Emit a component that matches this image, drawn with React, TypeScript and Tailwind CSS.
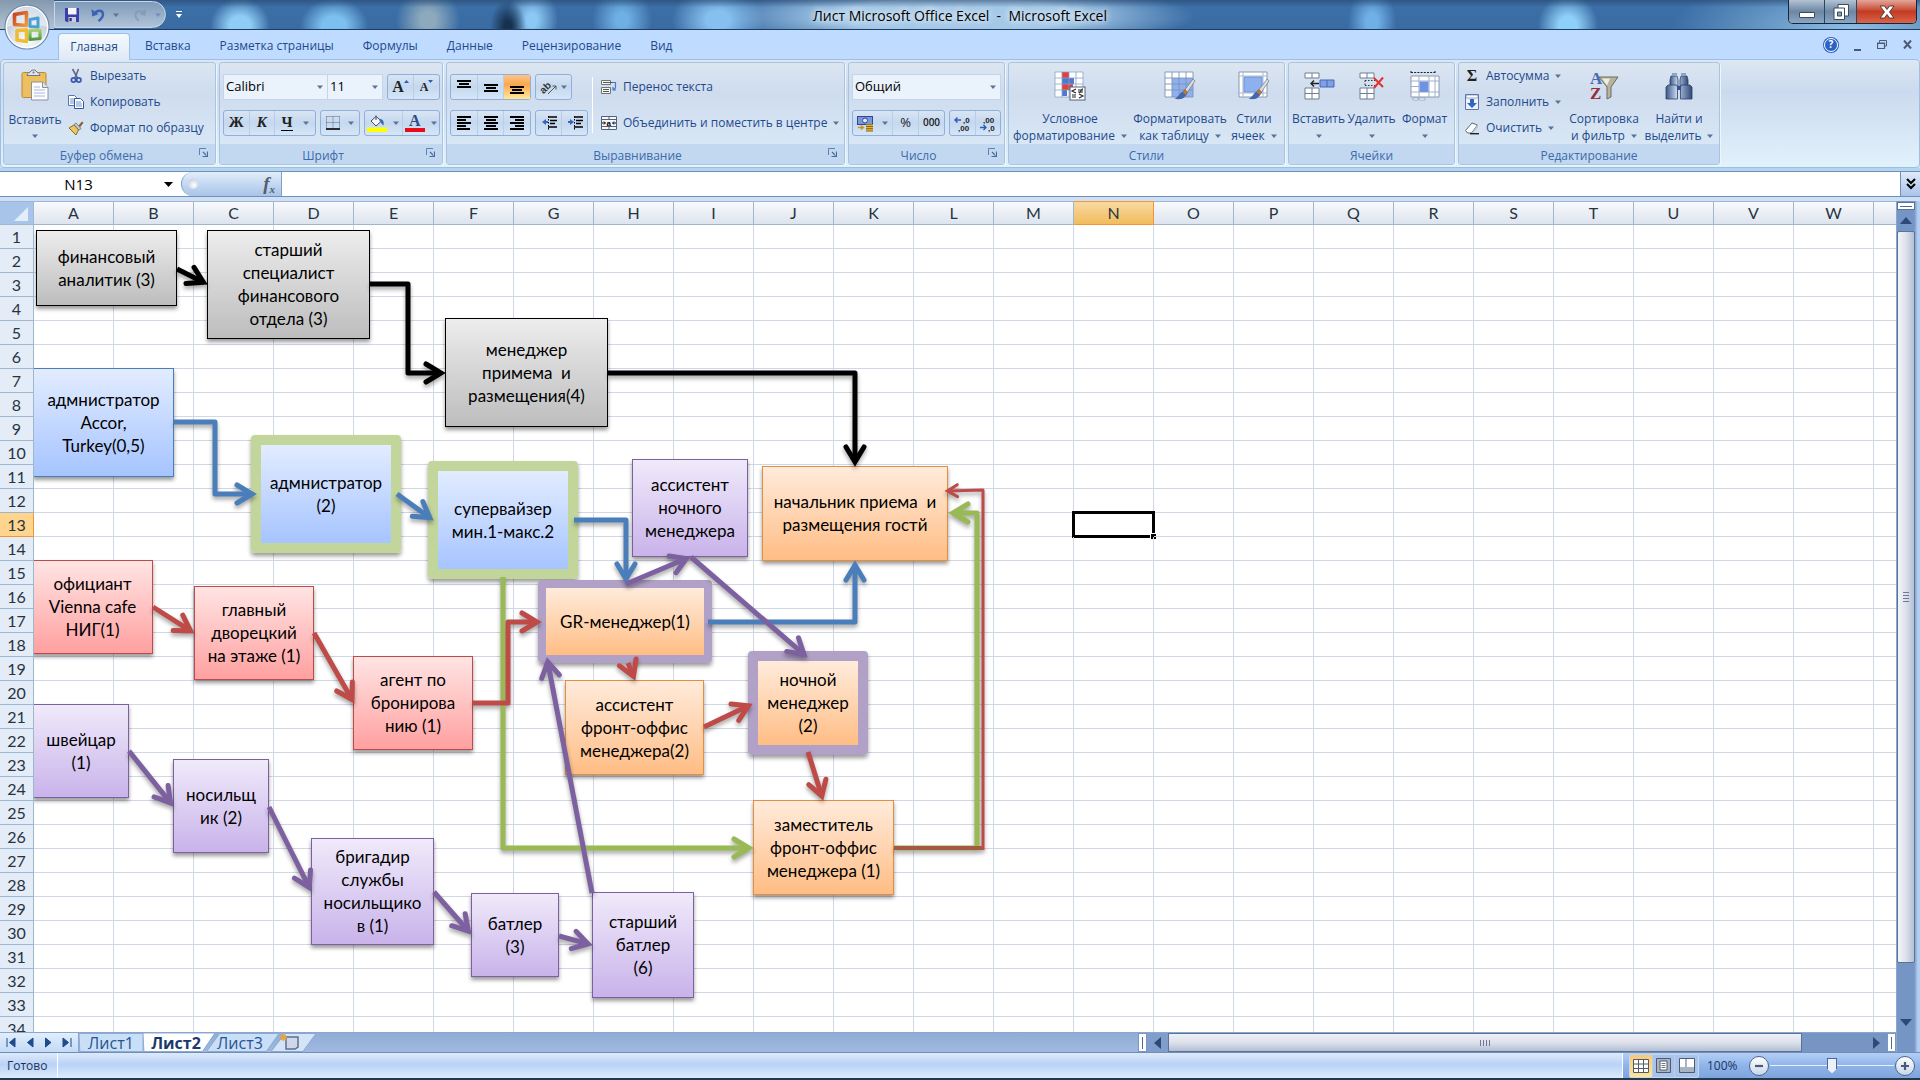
import React from "react";

type Pt = [number, number];

const COLS = "ABCDEFGHIJKLMNOPQRSTUVW".split("");
const ROWS = Array.from({ length: 34 }, (_, i) => i + 1);

/* ---------- small drawings ---------- */

function Caret({ className = "" }: { className?: string }) {
  return (
    <svg viewBox="0 0 6 4" className={"h-1 w-1.5 shrink-0 " + className} aria-hidden="true">
      <path d="M0 0.5h6L3 4z" fill="#5a7396" />
    </svg>
  );
}

function OfficeLogo() {
  return (
    <svg viewBox="0 0 46 46" className="h-[46px] w-[46px]" aria-hidden="true">
      <defs>
        <radialGradient id="orb" cx="50%" cy="80%" r="70%">
          <stop offset="0" stopColor="#ffffff" />
          <stop offset="0.55" stopColor="#d5dde9" />
          <stop offset="1" stopColor="#aebccd" />
        </radialGradient>
        <linearGradient id="oRed" x1="0" y1="0" x2="1" y2="1">
          <stop offset="0" stopColor="#c8411f" />
          <stop offset="1" stopColor="#f39a3c" />
        </linearGradient>
        <linearGradient id="oGreen" x1="0" y1="0" x2="0" y2="1">
          <stop offset="0" stopColor="#a7cf6a" />
          <stop offset="1" stopColor="#4f9a3f" />
        </linearGradient>
      </defs>
      <circle cx="23" cy="23" r="22" fill="url(#orb)" stroke="#6d86a6" strokeWidth="1.2" />
      <circle cx="23" cy="23" r="20.6" fill="none" stroke="#ffffff" strokeWidth="1.4" />
      <path d="M3 23a20 20 0 0 1 40 0c-12-4-28-4-40 0z" fill="#f2f6fb" opacity="0.6" />
      <g fill="none" strokeWidth="3.6" strokeLinejoin="round">
        <path d="M10.5 10.5l12-2v13l-12-1z" stroke="url(#oRed)" />
        <path d="M26 15.5l8-1.4v9l-8-.6z" stroke="#4a9fd4" strokeWidth="3" />
        <path d="M13 26.500l9.500-.5v11.500l-9.500-1.500z" stroke="#eebd35" />
        <path d="M26 26.500l10-.5v8.500l-10 1z" stroke="url(#oGreen)" strokeWidth="3.200" />
      </g>
    </svg>
  );
}

function SaveIcon() {
  return (
    <svg viewBox="0 0 14 14" className="h-3.5 w-3.5" aria-hidden="true">
      <path d="M0 0h14v14H1.500L0 12.500z" fill="#3b3fa8" />
      <path d="M3 0h8.500v6.500H3z" fill="#f4f6fb" />
      <path d="M3.500 9h7.500v5H3.500z" fill="#c9cfe2" />
      <path d="M4.500 10h2.200v3.200H4.500z" fill="#26286f" />
    </svg>
  );
}

function UndoIcon() {
  return (
    <svg viewBox="0 0 14 14" className="h-3.5 w-3.5" aria-hidden="true">
      <path d="M3.500 6C5.500 1.500 12 1.500 12 6.500c0 3-2 4.500-4.500 6.500" fill="none" stroke="#3b62b5" strokeWidth="2.400" />
      <path d="M0.500 1l.7 7.500 6.300-2.200z" fill="#3b62b5" />
    </svg>
  );
}

function RedoIcon() {
  return (
    <svg viewBox="0 0 14 14" className="h-3.5 w-3.5" aria-hidden="true">
      <path d="M10.500 5C8 1.500 2 3 2.500 8c.2 2 1.500 3.500 3.500 4.500" fill="none" stroke="#7f96b4" strokeWidth="2" />
      <path d="M13 1l-.5 7-6-2z" fill="#7f96b4" />
    </svg>
  );
}

function PasteIcon() {
  return (
    <svg viewBox="0 0 28 32" className="h-8 w-7" aria-hidden="true">
      <rect x="1" y="3.500" width="24" height="25" rx="1.500" fill="#eebf5e" stroke="#b98a35" />
      <path d="M6 6.500c0-3 3-2.500 4-4.500.7-1.400 4.300-1.400 5 0 1 2 4 1.500 4 4.500z" fill="#dfe3ea" stroke="#6c7686" />
      <circle cx="12.500" cy="3.500" r="1" fill="#6c7686" />
      <path d="M10.500 13h11l5.500 5.500V31h-16.500z" fill="#fdfdff" stroke="#8792a8" />
      <path d="M21.500 13v5.500H27" fill="#dfe6f2" stroke="#8792a8" />
      <path d="M13 18h6M13 21h11M13 24h11M13 27h11" stroke="#a9b9d8" />
    </svg>
  );
}

function CutIcon() {
  return (
    <svg viewBox="0 0 16 16" className="h-4 w-4" aria-hidden="true">
      <path d="M4.500 1l5 9M10.500 1L7 10" stroke="#5b6b86" strokeWidth="1.600" fill="none" />
      <circle cx="5.500" cy="12" r="2.100" fill="none" stroke="#3b59b0" strokeWidth="1.800" />
      <circle cx="10.800" cy="12" r="2.100" fill="none" stroke="#3b59b0" strokeWidth="1.800" />
    </svg>
  );
}

function CopyIcon() {
  return (
    <svg viewBox="0 0 16 16" className="h-4 w-4" aria-hidden="true">
      <path d="M0.500 1.500h6l2 2v8h-8z" fill="#fff" stroke="#5573ad" />
      <path d="M2 5h4M2 7h4M2 9h4" stroke="#6f92d0" />
      <path d="M6.500 4.500h6l3 3v7h-9z" fill="#fff" stroke="#34559b" />
      <path d="M8 8h5M8 10h6M8 12h6" stroke="#6f92d0" />
    </svg>
  );
}

function BrushIcon() {
  return (
    <svg viewBox="0 0 16 16" className="h-4 w-4" aria-hidden="true">
      <path d="M1 8l5-3 4.500 5L8 15z" fill="#ecc95f" stroke="#8b6a2a" />
      <path d="M6 4.500L8 3l5 5.500-2 1.500z" fill="#c9ccd4" stroke="#6b6f7a" strokeWidth="0.800" />
      <path d="M10.500 5.500L14 1.500l1.500 1.300-3.500 4.500z" fill="#8c5a2b" />
    </svg>
  );
}

function BordersIcon() {
  return (
    <svg viewBox="0 0 14 14" className="h-3.5 w-3.5" aria-hidden="true">
      <path d="M.5.5h13M.5.5v12M13.500.5v12M7 .5v12M.5 6.500h13" stroke="#5c6a85" strokeDasharray="1 1" fill="none" />
      <path d="M0 13h14" stroke="#000" strokeWidth="1.600" />
    </svg>
  );
}

function FillIcon() {
  return (
    <svg viewBox="0 0 20 18" className="h-[18px] w-5" aria-hidden="true">
      <path d="M4 7l5-4.500L14.500 7 9 12z" fill="#f2f5fa" stroke="#3d4b66" />
      <path d="M9 6V1.500" stroke="#3d4b66" />
      <path d="M12.500 5c3 0 5 2 4 6.500-2-1-2-3-4-4.500z" fill="#3f68b8" />
      <path d="M0 13.500h20v4.500H0z" fill="#ffff00" />
    </svg>
  );
}

function FontColorIcon() {
  return (
    <span className="flex w-5 flex-col items-center" aria-hidden="true">
      <span className="font-['Liberation_Serif',serif] text-base leading-[14px] font-bold text-[#2f4b86]">A</span>
      <span className="h-1 w-5 bg-[#e80c18]" />
    </span>
  );
}

function Lines({ rows, dy = 0 }: { rows: [number, number][]; dy?: number }) {
  return (
    <svg viewBox="0 0 14 14" className="h-3.5 w-3.5" aria-hidden="true" shapeRendering="crispEdges">
      {rows.map(([x, w], i) => (
        <rect key={i} x={x} y={dy + i * 3} width={w} height="1.500" fill="#000" />
      ))}
    </svg>
  );
}

function IndentIcon({ out = false }: { out?: boolean }) {
  return (
    <svg viewBox="0 0 16 14" className="h-3.5 w-4" aria-hidden="true">
      <path d="M7 1h9M9 4.500h7M9 7.500h5M7 11h9" stroke="#000" strokeWidth="1.600" />
      <path d="M7.500 0v14" stroke="#000" strokeDasharray="1.500 1.500" />
      {out ? <path d="M1 6l4-3v2h2v2H5v2z" fill="#3a63bd" /> : <path d="M7 6L3 3v2H1v2h2v2z" fill="#3a63bd" />}
    </svg>
  );
}

function OrientationIcon() {
  return (
    <svg viewBox="0 0 16 16" className="h-4 w-4 overflow-visible" aria-hidden="true">
      <text x="0" y="13" transform="rotate(-45 4 11)" fontSize="10" fontFamily="Liberation Sans, sans-serif" fontWeight="700" fill="#333">
        ab
      </text>
      <path d="M7 15l8-8M15 7v3.500M15 7h-3.500" stroke="#555" fill="none" />
    </svg>
  );
}

function WrapIcon() {
  return (
    <svg viewBox="0 0 16 16" className="h-4 w-4" aria-hidden="true">
      <path d="M.5 1.500h9v4h-9zM.5 8.500h9v6h-9z" fill="#fbf7d8" stroke="#6b7280" />
      <path d="M2 3.500h10M2 10.500h6M2 12.500h6" stroke="#4a5a78" />
      <path d="M12 3.500h2.500V9L12 11M12 8v3h3" fill="none" stroke="#4d78c8" strokeWidth="1.200" />
    </svg>
  );
}

function MergeIcon() {
  return (
    <svg viewBox="0 0 16 16" className="h-4 w-4" aria-hidden="true">
      <path d="M.5 1.500h15v13H.5z" fill="#f6f8fc" stroke="#55617a" />
      <path d="M.5 4.500h15M.5 11.500h15M8 1.500v3M8 11.500v3" stroke="#55617a" />
      <path d="M1 8h3M15 8h-3M3 6.500L4.500 8 3 9.500M13 6.500L11.500 8 13 9.500" stroke="#000" fill="none" />
      <text x="5.500" y="10.500" fontSize="8" fontWeight="700" fontFamily="Liberation Sans, sans-serif">a</text>
    </svg>
  );
}

function CurrencyIcon() {
  return (
    <svg viewBox="0 0 17 17" className="h-[17px] w-[17px]" aria-hidden="true">
      <rect x="0.500" y="1.500" width="15" height="8" fill="#7c97d6" stroke="#2d489a" />
      <circle cx="8" cy="5.500" r="2.500" fill="#dfe8fb" stroke="#2d489a" />
      <path d="M9 9.500h7v6.500H9z" fill="#e7b52b" />
      <path d="M9 11.500h7M9 13.700h7M9 16h7" stroke="#8c6413" />
      <path d="M1 12.500h5M4 10.500l2.500 2-2.500 2" stroke="#c8931d" fill="none" strokeWidth="1.300" />
    </svg>
  );
}

function DecimalIcon({ more = false }: { more?: boolean }) {
  return (
    <svg viewBox="0 0 17 17" className="h-[17px] w-[17px] overflow-visible" aria-hidden="true">
      <g fontSize="8" fontWeight="700" fontFamily="Liberation Sans, sans-serif" fill="#222">
        <text x={more ? 9 : 4} y="8">{more ? ",0" : ",00"}</text>
        <text x={more ? 4 : 9} y="15.500">{more ? ",00" : ",0"}</text>
      </g>
      {more ? (
        <path d="M7 5H1M3.500 2.500L1 5l2.500 2.500" stroke="#2f5bb8" fill="none" strokeWidth="1.400" />
      ) : (
        <path d="M1 12.500h6M4.500 10L7 12.500 4.500 15" stroke="#2f5bb8" fill="none" strokeWidth="1.400" />
      )}
    </svg>
  );
}

function PaintTip() {
  return (
    <g>
      <path d="M29 8L20 20l2.500 2.500L31 10z" fill="#d9dce2" stroke="#70757f" strokeWidth="0.700" />
      <path d="M21 18.500l-3 3 3.500 3 2-3.200z" fill="#c07a35" stroke="#7b4a1b" strokeWidth="0.600" />
      <path d="M18.500 21c-3 0-3 5-8 6.500 5 1.800 11 0 11-4z" fill="#3f68b0" />
    </g>
  );
}

function CondIcon() {
  return (
    <svg viewBox="0 0 32 30" className="h-[30px] w-8" aria-hidden="true">
      <path d="M1 1h28v25H1z" fill="#fff" />
      <path d="M8 1h7v6H8zM8 13h11v6H8z" fill="#e2403c" />
      <path d="M8 7h12v6H8zM8 19h5v6H8z" fill="#4f78cf" />
      <path d="M1 1h28v25H1zM1 7h28M1 13h28M1 19h28M8 1v25M15 1v25M22 1v25" stroke="#8aa2c8" strokeWidth="0.800" fill="none" />
      <rect x="16" y="16" width="15" height="13" fill="#fff" stroke="#55617a" />
      <path d="M22 18l-4 2 4 2M18 24h4M18 26h4M24 19h5M24 21h5M25.500 22l3-4.500M25 23l4 2-4 2" stroke="#222" fill="none" strokeWidth="1.100" />
    </svg>
  );
}

function FormatTableIcon() {
  return (
    <svg viewBox="0 0 32 30" className="h-[30px] w-8" aria-hidden="true">
      <path d="M1 1h28v25H1z" fill="#fff" />
      <path d="M8 7h21v19H8z" fill="#8fb0ee" />
      <path d="M1 1h28v25H1zM1 7h28M1 13h28M1 19h28M8 1v25M15 1v25M22 1v25" stroke="#7d93b8" strokeWidth="0.900" fill="none" />
      <PaintTip />
    </svg>
  );
}

function CellStylesIcon() {
  return (
    <svg viewBox="0 0 32 30" className="h-[30px] w-8" aria-hidden="true">
      <path d="M1 1h28v25H1z" fill="#fff" stroke="#8798b4" />
      <path d="M5 1v25M25 1v25M1 5h28M1 22h28" stroke="#a9b7cf" />
      <path d="M6 6h18v15H6z" fill="#8fb0ee" stroke="#6d90d6" />
      <PaintTip />
    </svg>
  );
}

function InsertCellsIcon() {
  return (
    <svg viewBox="0 0 32 30" className="h-[30px] w-8" aria-hidden="true">
      <path d="M2 2h14v5H2zM2 17h14v11H2z" fill="#fff" stroke="#6f7d95" />
      <path d="M9 2v5M9 17v11M2 22.500h14" stroke="#6f7d95" />
      <path d="M17 9h14v7H17z" fill="#7fa0e4" stroke="#4468b4" />
      <path d="M24 9v7" stroke="#4468b4" />
      <path d="M16 12.500H8M11 9.500l-3 3 3 3" stroke="#222" strokeWidth="1.400" fill="none" />
    </svg>
  );
}

function DeleteCellsIcon() {
  return (
    <svg viewBox="0 0 32 30" className="h-[30px] w-8" aria-hidden="true">
      <path d="M4 2h14v5H4zM4 17h14v11H4z" fill="#fff" stroke="#6f7d95" />
      <path d="M11 2v5M11 17v11M4 22.500h14" stroke="#6f7d95" />
      <path d="M9 9.500h11M9 14.500h11M9 9.500v5" stroke="#333" strokeDasharray="1.500 1.500" />
      <path d="M18 7l9 9M27 6.500l-9 10.500" stroke="#e5322d" strokeWidth="2" />
    </svg>
  );
}

function FormatCellsIcon() {
  return (
    <svg viewBox="0 0 32 30" className="h-[30px] w-8" aria-hidden="true">
      <path d="M2 1.500h24M2 0v3M26 0v3" stroke="#222" strokeDasharray="2 1.200" />
      <path d="M2 5h28v21H2z" fill="#fff" stroke="#8798b4" />
      <path d="M10 5v21M20 5v21M26 5v21M2 10h28M2 21h28M2 15.500h8" stroke="#9fb0cc" />
      <path d="M10.500 10.500h9v10.500h-9z" fill="#6f93e0" />
      <path d="M4 27h5v2H4zM10 27h6v2h-6z" fill="#fff" stroke="#8798b4" strokeWidth="0.700" />
    </svg>
  );
}

function FillDownIcon() {
  return (
    <svg viewBox="0 0 14 16" className="h-4 w-3.5" aria-hidden="true">
      <path d="M.5 .5h13v15H.5z" fill="#eef3fb" stroke="#5a77ab" />
      <path d="M1 1h12v3H1z" fill="#fff" stroke="#5a77ab" strokeWidth="0.600" />
      <path d="M5 5h4v4h3l-5 5-5-5h3z" fill="#3465c0" />
    </svg>
  );
}

function EraserIcon() {
  return (
    <svg viewBox="0 0 16 16" className="h-4 w-4" aria-hidden="true">
      <path d="M1.500 10.500L8 3l5.500 2-6 8h-4z" fill="#fbfcfe" stroke="#5d6880" />
      <path d="M7.500 13l6-8 .5 2.500L9 13z" fill="#b8c2d4" />
      <path d="M6 13.700h9" stroke="#222" strokeWidth="1.400" />
    </svg>
  );
}

function SortFilterIcon() {
  return (
    <svg viewBox="0 0 32 30" className="h-[30px] w-8 overflow-visible" aria-hidden="true">
      <g fontFamily="Liberation Serif, serif" fontWeight="700" fontSize="17">
        <text x="2" y="13" fill="#4a69b0">A</text>
        <text x="2" y="28" fill="#94303c">Z</text>
      </g>
      <path d="M11 6h19l-7 10v10l-4 2V16z" fill="#b8b39f" stroke="#6d6a5d" />
      <path d="M14 7.500h8l-3 7z" fill="#efece0" />
    </svg>
  );
}

function BinocularsIcon() {
  return (
    <svg viewBox="0 0 32 30" className="h-[30px] w-8" aria-hidden="true">
      <defs>
        <linearGradient id="bino" x1="0" x2="1" y1="0" y2="0">
          <stop offset="0" stopColor="#3b5584" />
          <stop offset="0.400" stopColor="#c3d2ea" />
          <stop offset="1" stopColor="#2f4876" />
        </linearGradient>
      </defs>
      <path d="M7 9l1-4h6l1 4v6H7zM17 9l1-4h6l1 4v6h-8z" fill="url(#bino)" stroke="#2b4270" strokeWidth="0.800" />
      <rect x="9" y="2" width="5" height="3" fill="#8ba3cc" />
      <rect x="18" y="2" width="5" height="3" fill="#8ba3cc" />
      <path d="M3 16l2-2h8.500l1 2v12H3zM17.500 16l1-2H27l2 2v12H17.500z" fill="url(#bino)" stroke="#2b4270" strokeWidth="0.800" />
      <path d="M14 15h4v4h-4z" fill="#33508a" />
    </svg>
  );
}

function LauncherIcon() {
  return (
    <svg viewBox="0 0 9 9" className="h-[9px] w-[9px]" aria-hidden="true">
      <path d="M.5 7V.5H7" stroke="#5f82b3" fill="none" />
      <path d="M3.500 8.500h5v-5M4 4l3.500 3.500" stroke="#4a6c9e" fill="none" strokeWidth="1.200" />
    </svg>
  );
}

/* ---------- ribbon pieces ---------- */

function Group({ title, width, launcher = false, children }: { title: string; width: string; launcher?: boolean; children: React.ReactNode }) {
  return (
    <section
      aria-label={title}
      className={"flex shrink-0 flex-col rounded-[3px] border border-[#a9c4e0] bg-linear-to-b from-[#dce6f2] via-[#cedcee] via-30% to-[#dcebf8] shadow-[1px_1px_0_#eef6fc] " + width}
    >
      <div className="flex flex-1">{children}</div>
      <div className={"flex h-5 items-end bg-[#c1d8f0] text-[#3e6aaa] " + (launcher ? "pr-1 pl-1" : "")}>
        <span className="flex-1 text-center leading-[17px]">{title}</span>
        {launcher && (
          <button aria-label={title + ": параметры"} className="mb-1 flex h-4 w-4 items-center justify-center">
            <LauncherIcon />
          </button>
        )}
      </div>
    </section>
  );
}

function BtnBox({ children, className = "" }: { children: React.ReactNode; className?: string }) {
  return (
    <div className={"flex h-[26px] items-stretch divide-x divide-[#b7cde8] rounded-[3px] border border-[#8fb0da] bg-linear-to-b from-[#d8e5f4] via-[#c5d8ee] via-50% to-[#d6e6f7] " + className}>
      {children}
    </div>
  );
}

function Btn({ label, children, className = "flex-1", active = false }: { label: string; children: React.ReactNode; className?: string; active?: boolean }) {
  return (
    <button
      aria-label={label}
      className={"flex items-center justify-center " + className + (active ? " bg-linear-to-b from-[#fbc48a] via-[#fba84a] via-40% to-[#ffe99a]" : "")}
    >
      {children}
    </button>
  );
}

function Combo({ label, value, className }: { label: string; value: string; className: string }) {
  return (
    <div className={"relative h-[26px] border border-[#c2d5ec] bg-[#eaf2fb] " + className}>
      <select aria-label={label} defaultValue={value} className="h-full w-full appearance-none px-0.5 text-[13px] text-black outline-none">
        <option>{value}</option>
      </select>
      <Caret className="pointer-events-none absolute top-2.5 right-1" />
    </div>
  );
}

function SmallCmd({ icon, text, caret = false }: { icon: React.ReactNode; text: string; caret?: boolean }) {
  return (
    <button className="flex h-[26px] items-center gap-1.5 whitespace-nowrap text-[#1e4a8c]">
      <span className="flex w-4 justify-center">{icon}</span>
      <span>{text}</span>
      {caret && <Caret />}
    </button>
  );
}

function BigCmd({ icon, lines, className = "" }: { icon: React.ReactNode; lines: [string, string?]; className?: string }) {
  return (
    <button className={"flex flex-col items-center justify-start pt-[7px] whitespace-nowrap text-[#1e4a8c] " + className}>
      <span className="flex h-8 items-center">{icon}</span>
      <span className="mt-2 leading-[17px]">{lines[0]}</span>
      <span className="flex h-[17px] items-center gap-1.5 leading-[17px]">
        {lines[1]}
        <Caret />
      </span>
    </button>
  );
}

function SerifGlyph({ children, className }: { children: React.ReactNode; className: string }) {
  return <span className={"font-['Liberation_Serif',serif] font-bold text-[#222] " + className}>{children}</span>;
}

function Ribbon() {
  return (
    <div className="flex h-[109px] shrink-0 gap-[3px] rounded-[4px] border border-[#9dbfe4] bg-linear-to-b from-[#dce7f4] via-[#cbdaee] via-30% to-[#e2f2fb] py-0.5 pl-0.5">
      <Group title="Буфер обмена" width="w-[213px]" launcher>
        <button className="ml-1 flex w-[54px] flex-col items-center pt-[6px] text-[#1e4a8c]">
          <PasteIcon />
          <span className="mt-2.5 leading-[17px]">Вставить</span>
          <Caret className="mt-1.5" />
        </button>
        <div className="ml-1.5 flex flex-col">
          <SmallCmd icon={<CutIcon />} text="Вырезать" />
          <SmallCmd icon={<CopyIcon />} text="Копировать" />
          <SmallCmd icon={<BrushIcon />} text="Формат по образцу" />
        </div>
      </Group>

      <Group title="Шрифт" width="w-[224px]" launcher>
        <div className="flex flex-1 flex-col gap-2.5 px-[3px] pt-[11px]">
          <div className="flex">
            <Combo label="Шрифт" value="Calibri" className="w-[105px]" />
            <Combo label="Размер" value="11" className="w-[55px] border-l-0" />
            <BtnBox className="ml-1 w-[53px]">
              <Btn label="Увеличить размер">
                <SerifGlyph className="text-base leading-5">A</SerifGlyph>
                <svg viewBox="0 0 5 3" className="mb-3 h-[3px] w-[5px]"><path d="M0 3h5L2.500 0z" fill="#2f5bb8" /></svg>
              </Btn>
              <Btn label="Уменьшить размер">
                <SerifGlyph className="text-xs leading-5">A</SerifGlyph>
                <svg viewBox="0 0 5 3" className="mb-3 h-[3px] w-[5px]"><path d="M0 0h5L2.500 3z" fill="#2f5bb8" /></svg>
              </Btn>
            </BtnBox>
          </div>
          <div className="flex gap-1">
            <BtnBox className="w-[93px]">
              <Btn label="Полужирный"><SerifGlyph className="text-[15px]">Ж</SerifGlyph></Btn>
              <Btn label="Курсив"><SerifGlyph className="text-[15px] italic">К</SerifGlyph></Btn>
              <Btn label="Подчёркнутый" className="w-10 gap-2.5">
                <SerifGlyph className="border-b border-black text-[15px] leading-[15px]">Ч</SerifGlyph>
                <Caret />
              </Btn>
            </BtnBox>
            <BtnBox className="w-10">
              <Btn label="Границы" className="flex-1 gap-2"><BordersIcon /><Caret /></Btn>
            </BtnBox>
            <BtnBox className="w-[76px]">
              <Btn label="Цвет заливки" className="flex-1 gap-1.5"><FillIcon /><Caret /></Btn>
              <Btn label="Цвет текста" className="flex-1 gap-1.5"><FontColorIcon /><Caret /></Btn>
            </BtnBox>
          </div>
        </div>
      </Group>

      <Group title="Выравнивание" width="w-[399px]" launcher>
        <div className="flex flex-col gap-2.5 pt-[11px] pl-[3px]">
          <div className="flex gap-1">
            <BtnBox className="w-[81px]">
              <Btn label="По верхнему краю"><Lines dy={0} rows={[[0, 14], [2, 10], [0, 14]]} /></Btn>
              <Btn label="По середине"><Lines dy={4} rows={[[0, 14], [2, 10], [0, 14]]} /></Btn>
              <Btn label="По нижнему краю" active><Lines dy={6} rows={[[0, 14], [2, 10], [0, 14]]} /></Btn>
            </BtnBox>
            <BtnBox className="w-[37px]">
              <Btn label="Ориентация" className="flex-1 gap-1"><OrientationIcon /><Caret /></Btn>
            </BtnBox>
          </div>
          <div className="flex gap-1">
            <BtnBox className="w-[81px]">
              <Btn label="По левому краю"><Lines rows={[[0, 14], [0, 9], [0, 14], [0, 9], [0, 13]]} /></Btn>
              <Btn label="По центру"><Lines rows={[[0, 14], [2, 10], [0, 14], [2, 10], [0, 14]]} /></Btn>
              <Btn label="По правому краю"><Lines rows={[[0, 14], [5, 9], [0, 14], [5, 9], [0, 14]]} /></Btn>
            </BtnBox>
            <BtnBox className="w-[53px]">
              <Btn label="Уменьшить отступ"><IndentIcon out /></Btn>
              <Btn label="Увеличить отступ"><IndentIcon /></Btn>
            </BtnBox>
          </div>
        </div>
        <div className="mt-3.5 ml-1 h-14 border-l border-white" />
        <div className="ml-2 flex flex-col gap-2.5 pt-[11px]">
          <SmallCmd icon={<WrapIcon />} text="Перенос текста" />
          <SmallCmd icon={<MergeIcon />} text="Объединить и поместить в центре" caret />
        </div>
      </Group>

      <Group title="Число" width="w-[157px]" launcher>
        <div className="flex flex-1 flex-col gap-2.5 px-[3px] pt-[11px]">
          <Combo label="Числовой формат" value="Общий" className="w-full" />
          <div className="flex gap-1">
            <BtnBox className="flex-1">
              <Btn label="Финансовый формат" className="w-10 gap-2"><CurrencyIcon /><Caret /></Btn>
              <Btn label="Процентный формат"><span className="text-[13px] text-[#222]">%</span></Btn>
              <Btn label="Формат с разделителями"><span className="text-[10px] font-semibold text-[#222]">000</span></Btn>
            </BtnBox>
            <BtnBox className="w-[52px]">
              <Btn label="Увеличить разрядность"><DecimalIcon more /></Btn>
              <Btn label="Уменьшить разрядность"><DecimalIcon /></Btn>
            </BtnBox>
          </div>
        </div>
      </Group>

      <Group title="Стили" width="w-[277px]">
        <BigCmd icon={<CondIcon />} lines={["Условное", "форматирование"]} className="w-[122px]" />
        <BigCmd icon={<FormatTableIcon />} lines={["Форматировать", "как таблицу"]} className="w-[98px]" />
        <BigCmd icon={<CellStylesIcon />} lines={["Стили", "ячеек"]} className="w-[50px]" />
      </Group>

      <Group title="Ячейки" width="w-[167px]">
        <BigCmd icon={<InsertCellsIcon />} lines={["Вставить"]} className="ml-[3px] flex-1" />
        <BigCmd icon={<DeleteCellsIcon />} lines={["Удалить"]} className="flex-1" />
        <BigCmd icon={<FormatCellsIcon />} lines={["Формат"]} className="mr-[3px] flex-1" />
      </Group>

      <Group title="Редактирование" width="w-[262px]">
        <div className="ml-[5px] flex w-[100px] flex-col">
          <SmallCmd icon={<SerifGlyph className="text-base">Σ</SerifGlyph>} text="Автосумма" caret />
          <SmallCmd icon={<FillDownIcon />} text="Заполнить" caret />
          <SmallCmd icon={<EraserIcon />} text="Очистить" caret />
        </div>
        <BigCmd icon={<SortFilterIcon />} lines={["Сортировка", "и фильтр"]} className="w-20" />
        <BigCmd icon={<BinocularsIcon />} lines={["Найти и", "выделить"]} className="w-[70px]" />
      </Group>
    </div>
  );
}

/* ---------- title and tab rows ---------- */

function TitleBar() {
  return (
    <header className="relative flex h-[30px] shrink-0 items-center border-b border-[#1d3c5e] bg-[linear-gradient(#24406488,transparent_25%),radial-gradient(ellipse_30px_28px_at_240px_26px,#8fcdf6_35%,transparent),radial-gradient(ellipse_34px_28px_at_334px_26px,#7cc0ee_35%,transparent),radial-gradient(ellipse_32px_34px_at_428px_20px,#8ca9bd_25%,transparent),radial-gradient(ellipse_18px_26px_at_508px_26px,#173250_20%,transparent),radial-gradient(ellipse_26px_34px_at_532px_20px,#8cc8f4_20%,transparent),radial-gradient(ellipse_30px_34px_at_622px_20px,#6fb0e4_20%,transparent),radial-gradient(ellipse_46px_36px_at_718px_20px,#86c0ee_25%,transparent),radial-gradient(ellipse_240px_34px_at_955px_16px,#a3c8e8_50%,transparent),radial-gradient(ellipse_24px_34px_at_1372px_22px,#6fb0e6_25%,transparent),radial-gradient(ellipse_30px_32px_at_1568px_26px,#8fd0fa_30%,transparent),radial-gradient(ellipse_180px_60px_at_1850px_30px,#8fbfe4,transparent),linear-gradient(#3c70a8,#3a6ca3)]">
      <div className="h-[29px] w-[54px] bg-linear-to-b from-[#8499ae] to-[#b4c3d4]" />
      <div className="flex h-[27px] w-28 items-center rounded-r-full border border-[#c6d6e6] bg-linear-to-b from-[#7f9ab8] to-[#b0c4da] pl-2.5">
        <button aria-label="Сохранить"><SaveIcon /></button>
        <button aria-label="Отменить" className="ml-3"><UndoIcon /></button>
        <Caret className="ml-2" />
        <button aria-label="Вернуть" className="ml-3.5 opacity-70"><RedoIcon /></button>
        <Caret className="ml-2 opacity-50" />
      </div>
      <button aria-label="Настройка панели быстрого доступа" className="ml-2.5 flex flex-col items-center gap-0.5">
        <span className="h-px w-1.5 bg-white" />
        <svg viewBox="0 0 6 4" className="h-1 w-1.5"><path d="M0 0h6L3 4z" fill="#fff" /></svg>
      </button>
      <h1 className="absolute inset-x-0 pt-0.5 text-center text-sm text-black [text-shadow:0_0_6px_#fff,0_0_10px_#fff]">
        Лист Microsoft Office Excel &nbsp;-&nbsp; Microsoft Excel
      </h1>
      <div className="absolute top-0 right-[3px] flex h-6 overflow-hidden rounded-b-[5px] border border-t-0 border-[#16263a] shadow-[inset_0_0_0_1px_#ffffff80]">
        <button aria-label="Свернуть" className="flex w-9 items-end justify-center border-r border-[#2b4663] bg-linear-to-b from-[#b3c3d4] via-[#6d87a3] via-50% to-[#8aa6c2] pb-[5px]">
          <span className="h-1.5 w-4 rounded-[1px] border border-[#3b4a5c] bg-white" />
        </button>
        <button aria-label="Восстановить" className="flex w-8 items-center justify-center border-r border-[#2b4663] bg-linear-to-b from-[#b3c3d4] via-[#6d87a3] via-50% to-[#8aa6c2]">
          <svg viewBox="0 0 18 18" className="h-[18px] w-[18px]">
            <path d="M6 1.500h10.500V13H6z" fill="#fff" stroke="#3b4a5c" />
            <path d="M2 5h10.500v11.500H2z" fill="#fff" stroke="#3b4a5c" />
            <path d="M5.500 9h4v4h-4z" fill="#8aa1ba" stroke="#3b4a5c" />
          </svg>
        </button>
        <button aria-label="Закрыть" className="flex w-[59px] items-center justify-center bg-linear-to-b from-[#e3a59a] via-[#c33a20] via-50% to-[#d9644a]">
          <svg viewBox="0 0 16 14" className="h-3.5 w-4">
            <path d="M1 1h4.500L8 4.500 10.500 1H15l-4.500 6L15 13h-4.500L8 9.500 5.500 13H1l4.500-6z" fill="#fff" stroke="#4a3030" strokeWidth="0.900" />
          </svg>
        </button>
      </div>
      <button aria-label="Кнопка Office" className="absolute top-1 left-1 z-10">
        <OfficeLogo />
      </button>
    </header>
  );
}

function TabRow() {
  const tabs = ["Главная", "Вставка", "Разметка страницы", "Формулы", "Данные", "Рецензирование", "Вид"];
  return (
    <nav className="flex h-[29px] shrink-0 items-stretch gap-px bg-[#bfdbff] pl-[58px]">
      {tabs.map((t, i) =>
        i === 0 ? (
          <button key={t} className="relative top-px z-[5] mt-0.5 w-[72px] rounded-t-[4px] border border-b-0 border-[#9dc0e8] bg-linear-to-b from-[#f4f9fe] to-[#dfe9f5] text-[#1e4a8c]">
            {t}
          </button>
        ) : (
          <button key={t} className="px-[14px] pt-[3px] text-[#1e4a8c]">
            {t}
          </button>
        )
      )}
      <div className="ml-auto flex items-center gap-4 pr-2 text-[#4b5c72]">
        <button aria-label="Справка" className="flex h-3.5 w-3.5 items-center justify-center rounded-full border border-white bg-[#2c62c4] text-[10px] font-bold text-white shadow-[0_0_0_1px_#2c62c4]">
          ?
        </button>
        <button aria-label="Свернуть книгу" className="flex h-3 w-[7px] items-end justify-center">
          <span className="h-0.5 w-[7px] bg-[#4b5c72]" />
        </button>
        <button aria-label="Восстановить книгу">
          <svg viewBox="0 0 10 9" className="h-[9px] w-2.5">
            <path d="M2.500 .5h7v5.500h-2M2.500 .5v2" fill="none" stroke="#4b5c72" />
            <path d="M.5 3h7v5.500h-7zM.5 3.500h7" fill="none" stroke="#4b5c72" strokeWidth="1.200" />
          </svg>
        </button>
        <button aria-label="Закрыть книгу">
          <svg viewBox="0 0 9 9" className="h-[9px] w-[9px]">
            <path d="M1 .5l7 8M8 .5l-7 8" stroke="#4b5c72" strokeWidth="2" />
          </svg>
        </button>
      </div>
    </nav>
  );
}

function FormulaBar() {
  return (
    <div className="flex h-[26px] shrink-0 items-stretch border-y border-[#6d8fb9] bg-white">
      <div className="relative flex w-[181px]">
        <input aria-label="Имя" defaultValue="N13" className="w-full pr-6 text-center text-[15px] text-black outline-none" />
        <button aria-label="Список имён" className="absolute top-2.5 right-2">
          <svg viewBox="0 0 9 5" className="h-[5px] w-[9px]"><path d="M0 0h9L4.500 5z" fill="#000" /></svg>
        </button>
      </div>
      <div className="flex w-[101px] items-center justify-between rounded-l-full border-r border-l border-[#7fa0c8] bg-linear-to-b from-[#e4eefa] via-[#c3d8f2] via-50% to-[#a9c4e8] pr-1.5 pl-1.5">
        <span className="h-2.5 w-2.5 rounded-full bg-[radial-gradient(circle_at_60%_60%,#fff,#b6c2d2)]" />
        <button aria-label="Вставить функцию" className="font-['Liberation_Serif',serif] text-[19px] leading-5 font-bold text-[#555d6b] italic">
          f<sub className="text-[11px]">x</sub>
        </button>
      </div>
      <input aria-label="Строка формул" className="min-w-0 flex-1 px-1 outline-none" />
      <button aria-label="Развернуть строку формул" className="flex w-5 items-center justify-center border-l border-[#6d8fb9] bg-linear-to-b from-[#dfeafa] to-[#a9c4ea]">
        <svg viewBox="0 0 10 12" className="h-3 w-2.5"><path d="M1 1l4 4 4-4M1 6l4 4 4-4" stroke="#000" strokeWidth="2" fill="none" /></svg>
      </button>
    </div>
  );
}

/* ---------- diagram ---------- */

type Tone = "gray" | "blue" | "red" | "violet" | "orange" | "blueGreen" | "orangeViolet8" | "orangeViolet10";

const TONES: Record<Tone, string> = {
  gray: "border border-black bg-linear-to-b from-[#ededed] to-[#bdbdbd]",
  blue: "border border-[#4a7ebb] bg-linear-to-b from-[#e2ecff] to-[#a6c4ff]",
  red: "border border-[#be4b48] bg-linear-to-b from-[#ffe4e4] to-[#ffa0a0]",
  violet: "border border-[#7d60a0] bg-linear-to-b from-[#f0eafa] to-[#c9b3ea]",
  orange: "border border-[#e58e3e] bg-linear-to-b from-[#ffebdb] to-[#ffbd84]",
  blueGreen: "rounded-[4px] border-[10px] border-[#c2d69b] bg-linear-to-b from-[#e2ecff] to-[#a6c4ff] bg-origin-padding",
  orangeViolet8: "rounded-[4px] border-[8px] border-[#b2a1c7] bg-linear-to-b from-[#ffebdb] to-[#ffbd84] bg-origin-padding",
  orangeViolet10: "rounded-[4px] border-[10px] border-[#b2a1c7] bg-linear-to-b from-[#ffebdb] to-[#ffbd84] bg-origin-padding",
};

/* Positions are in window pixels; the drawing layer starts at the first cell. */
const ORIGIN: Pt = [34, 225];

const NODES: { x: number; y: number; w: number; h: number; tone: Tone; lines: string[] }[] = [
  { x: 36, y: 230, w: 141, h: 76, tone: "gray", lines: ["финансовый", "аналитик (3)"] },
  { x: 207, y: 230, w: 163, h: 109, tone: "gray", lines: ["старший", "специалист", "финансового", "отдела (3)"] },
  { x: 445, y: 318, w: 163, h: 109, tone: "gray", lines: ["менеджер", "примема  и", "размещения(4)"] },
  { x: 33, y: 368, w: 141, h: 109, tone: "blue", lines: ["адмнистратор", "Accor,", "Turkey(0,5)"] },
  { x: 251, y: 435, w: 150, h: 118, tone: "blueGreen", lines: ["адмнистратор", "(2)"] },
  { x: 428, y: 461, w: 150, h: 118, tone: "blueGreen", lines: ["супервайзер", "мин.1-макс.2"] },
  { x: 632, y: 459, w: 116, h: 98, tone: "violet", lines: ["ассистент", "ночного", "менеджера"] },
  { x: 762, y: 466, w: 186, h: 95, tone: "orange", lines: ["начальник приема  и", "размещения гостй"] },
  { x: 538, y: 580, w: 174, h: 83, tone: "orangeViolet8", lines: ["GR-менеджер(1)"] },
  { x: 565, y: 680, w: 139, h: 95, tone: "orange", lines: ["ассистент", "фронт-оффис", "менеджера(2)"] },
  { x: 748, y: 651, w: 120, h: 104, tone: "orangeViolet10", lines: ["ночной", "менеджер", "(2)"] },
  { x: 32, y: 560, w: 121, h: 94, tone: "red", lines: ["официант", "Vienna cafe", "НИГ(1)"] },
  { x: 194, y: 586, w: 120, h: 94, tone: "red", lines: ["главный", "дворецкий", "на этаже (1)"] },
  { x: 353, y: 656, w: 120, h: 94, tone: "red", lines: ["агент по", "бронирова", "нию (1)"] },
  { x: 33, y: 704, w: 96, h: 94, tone: "violet", lines: ["швейцар", "(1)"] },
  { x: 173, y: 759, w: 96, h: 94, tone: "violet", lines: ["носильщ", "ик (2)"] },
  { x: 311, y: 838, w: 123, h: 107, tone: "violet", lines: ["бригадир", "службы", "носильщико", "в (1)"] },
  { x: 471, y: 893, w: 88, h: 84, tone: "violet", lines: ["батлер", "(3)"] },
  { x: 592, y: 892, w: 102, h: 106, tone: "violet", lines: ["старший", "батлер", "(6)"] },
  { x: 753, y: 800, w: 141, h: 95, tone: "orange", lines: ["заместитель", "фронт-оффис", "менеджера (1)"] },
];

const BLUE = "#4a7ebb";
const RED = "#be4b48";
const VIOLET = "#7d60a0";
const GREEN = "#98b954";

const LINKS: { pts: Pt[]; color: string; w?: number; head?: boolean }[] = [
  { pts: [[503, 577], [503, 848], [753, 848]], color: GREEN },
  { pts: [[894, 848], [977, 848], [977, 513], [949, 513]], color: GREEN },
  { pts: [[894, 848], [983, 848]], color: "#a6593f", w: 4, head: false },
  { pts: [[983, 850], [983, 490], [945, 491]], color: RED, w: 3 },
  { pts: [[177, 269], [207, 284]], color: "#000" },
  { pts: [[370, 284], [408, 284], [408, 373], [445, 373]], color: "#000" },
  { pts: [[608, 373], [855, 373], [855, 466]], color: "#000" },
  { pts: [[174, 422], [215, 422], [215, 494], [256, 494]], color: BLUE },
  { pts: [[397, 494], [433, 520]], color: BLUE },
  { pts: [[574, 520], [626, 520], [626, 583]], color: BLUE },
  { pts: [[708, 622], [855, 622], [855, 561]], color: BLUE },
  { pts: [[626, 584], [690, 557]], color: VIOLET },
  { pts: [[691, 557], [807, 657]], color: VIOLET },
  { pts: [[592, 893], [547, 658]], color: VIOLET },
  { pts: [[153, 607], [194, 633]], color: RED },
  { pts: [[314, 633], [354, 703]], color: RED },
  { pts: [[473, 703], [508, 703], [508, 622], [541, 622]], color: RED },
  { pts: [[628, 663], [635, 680]], color: RED },
  { pts: [[704, 727], [752, 704]], color: RED },
  { pts: [[808, 752], [823, 800]], color: RED },
  { pts: [[129, 751], [173, 806]], color: VIOLET },
  { pts: [[269, 807], [311, 891]], color: VIOLET },
  { pts: [[434, 892], [471, 934]], color: VIOLET },
  { pts: [[559, 936], [592, 945]], color: VIOLET },
];

function Link({ pts, color, w = 5, head = true }: { pts: Pt[]; color: string; w?: number; head?: boolean }) {
  const n = pts.length;
  const [tx, ty] = pts[n - 1];
  const [px, py] = pts[n - 2];
  const len = Math.hypot(tx - px, ty - py);
  const ux = (tx - px) / len;
  const uy = (ty - py) / len;
  const tip: Pt = head ? [tx - ux * w * 0.8, ty - uy * w * 0.8] : [tx, ty];
  const back = w === 3 ? 10 : 15;
  const side = w === 3 ? 6 : 9;
  const a: Pt = [tip[0] - ux * back - uy * side, tip[1] - uy * back + ux * side];
  const b: Pt = [tip[0] - ux * back + uy * side, tip[1] - uy * back - ux * side];
  return (
    <g fill="none" stroke={color} strokeWidth={w} strokeLinejoin="miter">
      <polyline points={[...pts.slice(0, -1), tip].join(" ")} strokeLinejoin="round" />
      {head && <polyline points={[a, tip, b].join(" ")} strokeLinecap="round" />}
    </g>
  );
}

function Diagram() {
  return (
    <div className="pointer-events-none absolute top-6 right-0 bottom-0 left-[34px] overflow-hidden font-[Lato,'Noto_Sans',sans-serif] text-[17px] leading-[23px] text-black">
      {NODES.map((n, i) => (
        <div
          key={i}
          className={"absolute flex flex-col items-center justify-center pb-px whitespace-pre shadow-[0_3px_4px_rgba(0,0,0,0.4)] " + TONES[n.tone]}
          style={{ left: n.x - ORIGIN[0], top: n.y - ORIGIN[1], width: n.w, height: n.h }}
        >
          {n.lines.map((l) => (
            <span key={l}>{l}</span>
          ))}
        </div>
      ))}
      <svg viewBox="34 225 1000 800" className="absolute top-0 left-0 h-[800px] w-[1000px] drop-shadow-[0_3px_2px_rgba(0,0,0,0.35)]" aria-hidden="true">
        {LINKS.map((l, i) => (
          <Link key={i} {...l} />
        ))}
      </svg>
    </div>
  );
}

/* ---------- sheet ---------- */

function Sheet() {
  return (
    <div className="relative min-h-0 flex-1 overflow-hidden bg-white">
      <table className="w-full table-fixed border-separate border-spacing-0 font-[Lato,'Noto_Sans',sans-serif] text-[16px] text-[#27343f]">
        <thead>
          <tr className="h-6">
            <th className="w-[34px] border-t border-r border-b border-[#9eb6ce] bg-[#a9c4e9] p-0">
              <svg viewBox="0 0 33 22" className="block h-[22px] w-full"><path d="M28 5v14H14z" fill="#e4eefa" /></svg>
            </th>
            {COLS.map((c) => (
              <th
                key={c}
                scope="col"
                className={
                  "w-20 border-t border-r border-b p-0 leading-[22px] font-normal " +
                  (c === "N" ? "border-[#f29536] bg-linear-to-b from-[#f9d9a0] to-[#f1bc5c]" : "border-[#9eb6ce] bg-linear-to-b from-[#f8fafc] to-[#dde4ee]")
                }
              >
                {c}
              </th>
            ))}
            <th className="border-t border-b border-[#9eb6ce] bg-linear-to-b from-[#f8fafc] to-[#dde4ee] p-0" />
          </tr>
        </thead>
        <tbody>
          {ROWS.map((r) => (
            <tr key={r} className="h-6">
              <th
                scope="row"
                className={"border-r border-b p-0 leading-[23px] font-normal " + (r === 13 ? "border-[#f29536] bg-[#ffd58d]" : "border-[#9eb6ce] bg-[#e4ecf7]")}
              >
                {r}
              </th>
              {COLS.map((c) => (
                <td key={c} className="relative border-r border-b border-[#d0d7e5] p-0">
                  {c === "N" && r === 13 && (
                    <span className="absolute -top-0.5 -right-0.5 -bottom-0.5 -left-0.5 border-[3px] border-black">
                      <span className="absolute -right-1 -bottom-1 h-1.5 w-1.5 border-t border-l border-white bg-black" />
                    </span>
                  )}
                </td>
              ))}
              <td className="border-b border-[#d0d7e5] p-0" />
            </tr>
          ))}
        </tbody>
      </table>
      <Diagram />
    </div>
  );
}

function SheetTab({ name, active = false, slantLeft = false, className }: { name: string; active?: boolean; slantLeft?: boolean; className: string }) {
  return (
    <button className={"relative h-5 text-base leading-5 " + className + (active ? " z-[2] font-bold text-[#1a3a6e]" : " z-[1] text-[#27538f]")}>
      <svg viewBox="0 0 80 20" preserveAspectRatio="none" className="absolute inset-0 h-full w-full" aria-hidden="true">
        <path
          d={slantLeft ? "M0 18L14 0.500H80L66 18.500H1z" : active ? "M0 0H80L66 18.500H1z" : "M0 0.500H80V18.500H1z"}
          fill={active ? "#fff" : "#c9def7"}
          stroke="#8aa8cf"
          strokeWidth="1"
        />
      </svg>
      <span className="relative">{name}</span>
    </button>
  );
}

function Bottom() {
  const nav: [string, string][] = [
    ["Первый лист", "M1 1v9M9 1L3.500 5.500 9 10z"],
    ["Предыдущий лист", "M8 1L2.500 5.500 8 10z"],
    ["Следующий лист", "M2.500 1L8 5.500 2.500 10z"],
    ["Последний лист", "M1 1l5.500 4.500L1 10zM9 1v9"],
  ];
  return (
    <div className="flex h-5 shrink-0 items-stretch border-t border-[#8aa8cf] bg-linear-to-b from-[#8fadd6] to-[#a0b9e0]">
      <div className="flex w-[79px] items-center justify-around border-r border-[#8aa8cf] bg-linear-to-b from-[#e2eefb] to-[#c3daf6] px-0.5">
        {nav.map(([l, d]) => (
          <button key={l} aria-label={l}>
            <svg viewBox="0 0 10 11" className="h-[11px] w-2.5"><path d={d} fill="#1f4a8e" stroke="#1f4a8e" strokeWidth="1" /></svg>
          </button>
        ))}
      </div>
      <SheetTab name="Лист1" className="w-16" />
      <SheetTab name="Лист2" active className="w-[72px] pr-1.5" />
      <SheetTab name="Лист3" slantLeft className="-ml-2 w-[72px] pr-1.5" />
      <button aria-label="Вставить лист" className="relative -ml-2 h-5 w-[46px]">
        <svg viewBox="0 0 46 20" className="h-5 w-[46px]">
          <path d="M0 18.500L14 0.500H45L32 18.500z" fill="#d3e4f8" stroke="#8aa8cf" />
          <path d="M15 4h12v10l-3 2h-9z" fill="#cfd8ea" stroke="#5e6f8c" strokeWidth="1.500" />
          <path d="M12.500 1v7M9 4.500h7M10 2l5 5M15 2l-5 5" stroke="#e8a33a" strokeWidth="1.400" />
        </svg>
      </button>
      <div className="ml-auto flex w-[758px] items-stretch">
        <span className="flex w-[9px] items-center justify-center border border-[#7c96bd] bg-white"><span className="h-3 w-px bg-[#4a6a98]" /></span>
        <button aria-label="Прокрутить влево" className="flex w-[21px] items-center justify-center bg-[#7f9ecb]">
          <svg viewBox="0 0 7 12" className="h-3 w-[7px]"><path d="M7 0v12L0 6z" fill="#2c4a78" /></svg>
        </button>
        <div className="flex flex-1 bg-[#7695c3]">
          <div className="flex w-[91%] items-center justify-center gap-0.5 border border-[#5b7396] bg-linear-to-b from-[#eef0f6] via-[#dde1eb] via-50% to-[#b3bfd4]">
            {[0, 1, 2, 3].map((i) => (
              <span key={i} className="h-1.5 w-px bg-[#6b7b96]" />
            ))}
          </div>
        </div>
        <button aria-label="Прокрутить вправо" className="flex w-[22px] items-center justify-center bg-[#7695c3]">
          <svg viewBox="0 0 7 12" className="h-3 w-[7px]"><path d="M0 0v12l7-6z" fill="#2c4a78" /></svg>
        </button>
        <span className="flex w-[9px] items-center justify-center border border-[#7c96bd] bg-white"><span className="h-3 w-px bg-[#4a6a98]" /></span>
      </div>
    </div>
  );
}

function VScroll() {
  return (
    <div className="flex w-6 shrink-0 flex-col items-center border-l border-[#8aa8cf] bg-linear-to-r from-[#7595c4] from-75% to-[#b3cef2] to-90% pr-[5px]">
      <span className="mt-px flex h-2 w-full items-center justify-center border border-[#5b7396] bg-white"><span className="h-px w-3 bg-[#4a6a98]" /></span>
      <button aria-label="Прокрутить вверх" className="flex h-[21px] w-full items-center justify-center">
        <svg viewBox="0 0 12 7" className="h-[7px] w-3"><path d="M0 7h12L6 0z" fill="#2c4a78" /></svg>
      </button>
      <div className="flex w-full flex-1 flex-col">
        <div className="flex h-[94%] w-full flex-col items-center justify-center gap-0.5 rounded-[2px] border border-[#5b7396] bg-linear-to-r from-[#f2f4f9] via-[#dde1eb] via-50% to-[#b3bfd4]">
          {[0, 1, 2, 3].map((i) => (
            <span key={i} className="h-px w-1.5 bg-[#6b7b96]" />
          ))}
        </div>
      </div>
      <button aria-label="Прокрутить вниз" className="mb-[18px] flex h-6 w-full items-center justify-center">
        <svg viewBox="0 0 12 7" className="h-[7px] w-3"><path d="M0 0h12L6 7z" fill="#2c4a78" /></svg>
      </button>
    </div>
  );
}

function RoundBtn({ label, d }: { label: string; d: string }) {
  return (
    <button aria-label={label} className="flex h-5 w-5 items-center justify-center rounded-full border border-[#4d678f] bg-linear-to-b from-white to-[#c9d6e9]">
      <svg viewBox="0 0 12 12" className="h-3 w-3"><path d={d} stroke="#4a5a75" strokeWidth="2.200" /></svg>
    </button>
  );
}

function StatusBar() {
  return (
    <footer className="flex h-7 shrink-0 items-stretch border-t border-b-2 border-t-[#6d8fb9] border-b-[#22384f] bg-linear-to-b from-[#dfeafa] via-[#b9d2f6] via-45% to-[#dcebfb] text-[#1b3360]">
      <div className="flex w-[58px] items-center border-r border-white pt-px pl-[7px] text-xs">Готово</div>
      <div className="ml-auto flex w-[298px] items-center border-l border-white bg-linear-to-b from-[#b4cff5] via-[#8fb4ea] via-50% to-[#7ea4dc] pl-1.5">
        <div className="flex h-6 items-stretch divide-x divide-[#b9cce8] rounded-[2px] border border-[#c5d8f2] bg-[#a8c4ec]">
          <button aria-label="Обычный" className="flex w-[23px] items-center justify-center bg-linear-to-b from-[#f7c87c] to-[#fde59a]">
            <svg viewBox="0 0 16 14" className="h-3.5 w-4"><path d="M.5.5h15v13H.5zM.5 5h15M.5 9.500h15M5.500 .5v13M10.500 .5v13" fill="#fff" stroke="#4f5a6c" /></svg>
          </button>
          <button aria-label="Разметка страницы" className="flex w-[22px] items-center justify-center">
            <svg viewBox="0 0 15 15" className="h-[15px] w-[15px]"><path d="M.5.5h14v14H.5z" fill="#a9b3c4" stroke="#4f5a6c" /><path d="M4 3h7v9H4z" fill="#fff" stroke="#4f5a6c" /><path d="M5.500 5.500h4M5.500 7.500h4M5.500 9.500h4" stroke="#6b7789" /></svg>
          </button>
          <button aria-label="Страничный" className="flex w-[23px] items-center justify-center">
            <svg viewBox="0 0 16 15" className="h-[15px] w-4"><path d="M.5.5h15v14H.5z" fill="#a9b3c4" stroke="#4f5a6c" /><path d="M1 1h5v8H1zM8 1h7v8H8z" fill="#fff" /></svg>
          </button>
        </div>
        <span className="mr-1.5 ml-2 w-9 text-xs">100%</span>
        <RoundBtn label="Уменьшить" d="M2 6h8" />
        <input
          type="range"
          aria-label="Масштаб"
          defaultValue={50}
          className="mx-px h-5 min-w-0 flex-1 appearance-none bg-[linear-gradient(#e8f1fc,#e8f1fc)] bg-[length:100%_1px] bg-center bg-no-repeat [&::-webkit-slider-thumb]:h-4 [&::-webkit-slider-thumb]:w-2.5 [&::-webkit-slider-thumb]:appearance-none [&::-webkit-slider-thumb]:border [&::-webkit-slider-thumb]:border-[#4d678f] [&::-webkit-slider-thumb]:bg-[#eaf1fa] [&::-webkit-slider-thumb]:[clip-path:polygon(0_0,100%_0,100%_70%,50%_100%,0_70%)]"
        />
        <RoundBtn label="Увеличить" d="M2 6h8M6 2v8" />
        <span className="w-[5px]" />
      </div>
    </footer>
  );
}

export default function App() {
  return (
    <div className="flex h-screen flex-col overflow-hidden bg-[#cfe0f4] font-['Open_Sans','Noto_Sans',sans-serif] text-xs">
      <TitleBar />
      <TabRow />
      <Ribbon />
      <div className="h-[3px] shrink-0 bg-[#b5d4f0]" />
      <FormulaBar />
      <div className="h-1 shrink-0 bg-[#cfe0f4]" />
      <div className="flex min-h-0 flex-1">
        <main className="flex min-w-0 flex-1 flex-col">
          <Sheet />
          <Bottom />
        </main>
        <VScroll />
      </div>
      <StatusBar />
    </div>
  );
}
